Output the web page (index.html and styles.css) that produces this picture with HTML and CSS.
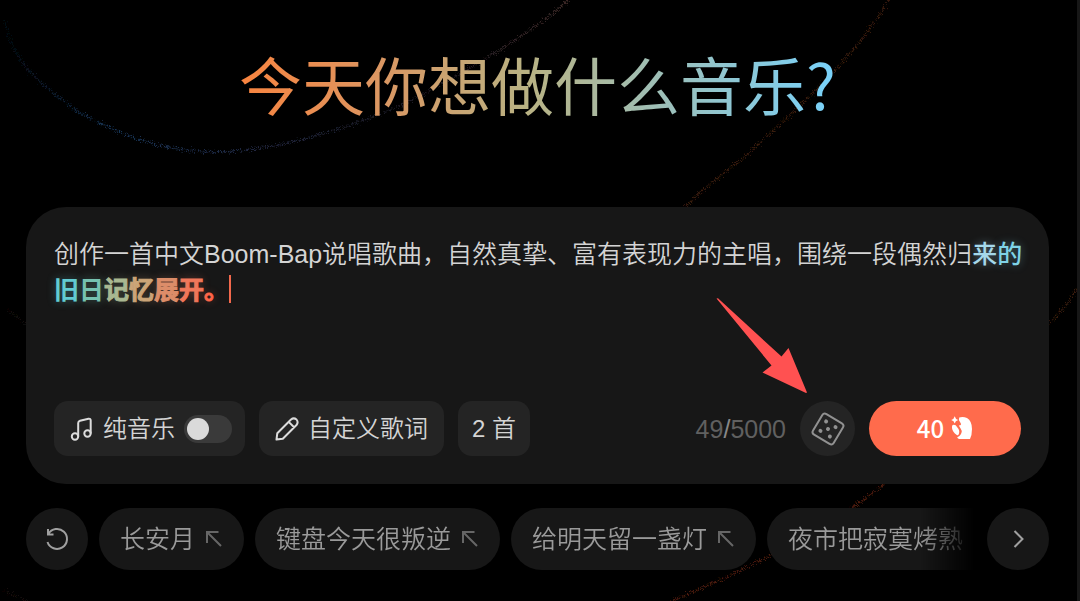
FILE: index.html
```html
<!DOCTYPE html>
<html lang="zh-CN">
<head>
<meta charset="utf-8">
<meta name="viewport" content="width=device-width, initial-scale=1">
<title>今天你想做什么音乐?</title>
<link rel="stylesheet" href="styles.css">
</head>
<body>
<div class="page">
  <svg class="orbits" viewBox="0 0 1080 601" preserveAspectRatio="none" aria-hidden="true">
    <defs>
      <filter id="grain" filterUnits="userSpaceOnUse" x="0" y="0" width="1080" height="601">
        <feTurbulence type="fractalNoise" baseFrequency="0.8" numOctaves="2" seed="4" result="n"/>
        <feDisplacementMap in="SourceGraphic" in2="n" scale="9" xChannelSelector="R" yChannelSelector="G"/>
      </filter>
      <linearGradient id="cool" gradientUnits="userSpaceOnUse" x1="0" y1="0" x2="570" y2="0">
        <stop offset="0" stop-color="#04080e"/><stop offset=".2" stop-color="#193558"/>
        <stop offset=".45" stop-color="#20263e"/><stop offset=".75" stop-color="#1d1a22"/><stop offset="1" stop-color="#3c2927"/>
      </linearGradient>
    </defs>
    <g class="orbit-lines" filter="url(#grain)">
      <path stroke="url(#cool)" d="M5 20C11 58 34 80 76 110C120 136 165 152 220 152C285 150 370 123 427 93C480 63 532 34 570 0"/>
      <path class="warm" d="M891 0C860 56 792 115 752 152C729 171 706 188 686 208"/>
      <path class="warm" d="M1080 289Q1068 308 1050 326"/>
      <path class="ember" d="M891 480C851 515 791 546 769 557C736 575 701 589 672 602"/>
      <path class="faint" d="M8 310L28 326M3 590L26 601"/>
    </g>
  </svg>

  <main class="content">
    <h1 class="title">今天你想做什么音乐?</h1>

    <section class="composer">
      <div class="prompt" contenteditable="true" role="textbox" aria-multiline="true" aria-label="音乐描述" spellcheck="false">创作一首中文Boom-Bap说唱歌曲，自然真挚、富有表现力的主唱，围绕一段偶然归<span class="fresh c1">来</span><span class="fresh c2">的</span><span class="fresh c3">旧</span><span class="fresh c4">日</span><span class="fresh heavy c5">记</span><span class="fresh heavy c6">忆</span><span class="fresh heavy c7">展</span><span class="fresh heavy c8">开</span><span class="fresh heavy c9">。</span><span class="caret"></span></div>
      <div class="toolbar">
        <label class="tool">
          <svg width="24" height="24" viewBox="0 0 24 24" class="icon" aria-hidden="true"><circle cx="5" cy="19.500" r="3.200"/><circle cx="17.500" cy="16.500" r="3.200"/><path d="M8.200 19.500V6Q8.200 4.300 10 3.800L18.500 1.800Q20.700 1.500 20.700 3.500V16.500"/></svg>
          <span>纯音乐</span>
          <input class="switch" type="checkbox" role="switch">
        </label>
        <button class="tool" type="button">
          <svg width="24" height="24" viewBox="0 0 24 24" class="icon" aria-hidden="true"><path d="M1.500 22.500L2.300 16.200L16 2.500Q18.700 0.300 21.500 2.500Q23.700 5.300 21.500 8L7.800 21.700ZM13.700 4.900L19.100 10.300"/></svg>
          <span>自定义歌词</span>
        </button>
        <button class="tool count" type="button">2 首</button>
        <span class="limit">49<b>/</b>5000</span>
        <button class="dice" type="button" aria-label="随机">
          <svg width="34" height="34" viewBox="0 0 34 34" aria-hidden="true"><g transform="rotate(31 17 17)"><rect x="5" y="5" width="24" height="24" rx="3"/><circle cx="11.500" cy="11.500" r="2"/><circle cx="22.500" cy="11.500" r="2"/><circle cx="17" cy="17" r="2"/><circle cx="11.500" cy="22.500" r="2"/><circle cx="22.500" cy="22.500" r="2"/></g></svg>
        </button>
        <button class="create" type="button" aria-label="生成，40">
          <span>40</span>
          <svg width="22" height="24" viewBox="0 0 22 24" aria-hidden="true"><path d="M3.700 0.300Q4.300 3.200 7.200 3.900Q4.300 4.600 3.700 7.500Q3.100 4.600 0.200 3.900Q3.100 3.200 3.700 0.300ZM1.600 9Q4.500 8 6.200 11.200Q9 14 8 17.500Q7.500 20 5.800 19Q1.500 16 1 12Q.8 10 1.600 9ZM8.200 1.500Q12 0.200 16 2Q21 5 21 13Q21 19 19 23H8Q6.500 22.500 6.200 21.300Q10.500 19.500 10.800 15Q10 13 7.800 9.500Q11.500 9.500 9 6Q7.200 4 8.200 1.500Z"/></svg>
        </button>
      </div>
    </section>

    <nav class="ideas" aria-label="灵感">
      <button class="round" type="button" aria-label="换一批">
        <svg width="26" height="26" viewBox="0 0 26 26" aria-hidden="true"><path d="M4.300 8A10 10 0 1 1 3.500 16M4 3V8.500H9.500"/></svg>
      </button>
      <div class="track">
        <button class="chip" type="button"><span>长安月</span><svg width="18" height="18" viewBox="0 0 18 18" aria-hidden="true"><path d="M2 13V2H13.500M2.500 2.500L16 16"/></svg></button>
        <button class="chip" type="button"><span>键盘今天很叛逆</span><svg width="18" height="18" viewBox="0 0 18 18" aria-hidden="true"><path d="M2 13V2H13.500M2.500 2.500L16 16"/></svg></button>
        <button class="chip" type="button"><span>给明天留一盏灯</span><svg width="18" height="18" viewBox="0 0 18 18" aria-hidden="true"><path d="M2 13V2H13.500M2.500 2.500L16 16"/></svg></button>
        <button class="chip" type="button"><span>夜市把寂寞烤熟</span><svg width="18" height="18" viewBox="0 0 18 18" aria-hidden="true"><path d="M2 13V2H13.500M2.500 2.500L16 16"/></svg></button>
      </div>
      <button class="round" type="button" aria-label="下一组">
        <svg width="26" height="26" viewBox="0 0 26 26" aria-hidden="true"><path d="M9.500 5L17.500 13L9.500 21"/></svg>
      </button>
    </nav>
  </main>

  <svg class="pointer" width="92" height="97" viewBox="0 0 92 97" aria-hidden="true"><path d="M0.500 0.500L2 0.300L65.500 58.500L72.500 50L91 94.500L90 95L46.500 74.500L55.500 67.500Z"/></svg>
</div>
</body>
</html>
```

FILE: styles.css
```css
* { box-sizing: border-box; }

body {
  margin: 0;
  background: #000;
  color: #d4d4d4;
  font-family: "Liberation Sans", "Noto Sans CJK SC", sans-serif;
}

button { font: inherit; color: inherit; border: 0; cursor: pointer; }
svg { display: block; flex: none; }

.page {
  position: relative;
  min-height: 100vh;
  border-right: 3px solid #171717;
  overflow: hidden;
}

.orbits { position: absolute; inset: 0; width: 100%; height: 100%; }
.orbit-lines { fill: none; }
.orbit-lines path { stroke-width: 2; stroke-dasharray: 2 1; }
.orbit-lines .warm { stroke: #391b0d; }
.orbit-lines .ember { stroke: #4a1a0d; }
.orbit-lines .faint { stroke: #140e0c; }

.content { position: relative; padding: 45px 28px 31px 26px; }

.title {
  width: fit-content;
  margin: 0 auto 86px;
  font-family: "Noto Sans CJK SC", sans-serif;
  font-size: 63px;
  font-weight: 400;
  line-height: 76px;
  background: linear-gradient(90deg, #f9843f, #dd9560 22%, #b9b283 48%, #9cc0bb 72%, #78d2fb);
  -webkit-background-clip: text;
  background-clip: text;
  color: transparent;
}

.composer { padding: 29px 28px 28px; border-radius: 40px; background: #171717; }

.prompt {
  min-height: 165px;
  margin-right: -8px;
  font-size: 25px;
  font-weight: 350;
  line-height: 36px;
  outline: 0;
}

.fresh { font-weight: 700; text-shadow: 0 0 8px color-mix(in srgb, currentColor 40%, transparent); }
.fresh.c1, .fresh.c2 { font-weight: 500; }
.heavy { -webkit-text-stroke: 1px currentColor; }
.c1 { color: #a5d8ea; }
.c2 { color: #7fd3e6; }
.c3 { color: #62ccd2; }
.c4 { color: #76c2b0; }
.c5 { color: #a9b892; }
.c6 { color: #cba578; }
.c7 { color: #dc8d69; }
.c8 { color: #f0775a; }
.c9 { color: #ff6649; }

.caret {
  display: inline-block;
  width: 2px;
  height: 28px;
  background: #f2684c;
  vertical-align: -4px;
}

.toolbar { display: flex; align-items: center; gap: 14px; font-size: 24px; line-height: 36px; }

.tool {
  display: flex;
  align-items: center;
  gap: 9px;
  height: 55px;
  padding: 0 13px 0 16px;
  border-radius: 14px;
  background: #242424;
  font-weight: 350;
  white-space: nowrap;
  cursor: pointer;
}
button.tool { padding-right: 16px; }
button.count { padding: 0 14px; }

.icon { fill: none; stroke: #dcdcdc; stroke-width: 2; stroke-linejoin: round; }

.switch {
  appearance: none;
  display: flex;
  align-items: center;
  width: 48px;
  height: 28px;
  margin: 0;
  padding: 3px;
  border-radius: 14px;
  background: #3a3a3a;
}
.switch::before { content: ""; width: 22px; height: 22px; border-radius: 50%; background: #dadada; }
.switch:checked { justify-content: flex-end; background: #ff6a4b; }

.limit { margin-left: auto; color: #606060; font-size: 25px; }
.limit b { font-weight: 400; color: #888; }

.dice {
  display: grid;
  place-items: center;
  width: 55px;
  height: 55px;
  padding: 0;
  border-radius: 50%;
  background: #242424;
}
.dice rect { fill: none; stroke: #919191; stroke-width: 2; }
.dice circle { fill: #919191; }

.create {
  display: flex;
  align-items: center;
  justify-content: center;
  gap: 7px;
  width: 152px;
  height: 55px;
  padding: 0 0 2px;
  border-radius: 28px;
  background: #ff6b4c;
  color: #fff;
  font-family: "Noto Sans CJK SC", sans-serif;
  font-weight: 500;
}
.create svg { fill: #fff; }

.ideas { display: flex; gap: 11px; margin-top: 24px; }

.round {
  display: grid;
  place-items: center;
  flex: none;
  width: 62px;
  height: 62px;
  padding: 0;
  border-radius: 50%;
  background: #171717;
}
.round svg { fill: none; stroke: #a0a0a0; stroke-width: 2; }

.track {
  display: flex;
  flex: 1;
  gap: 11px;
  min-width: 0;
  overflow: hidden;
  -webkit-mask-image: linear-gradient(90deg, #000 calc(100% - 56px), transparent calc(100% - 2px));
  mask-image: linear-gradient(90deg, #000 calc(100% - 56px), transparent calc(100% - 2px));
}

.chip {
  display: flex;
  flex: none;
  align-items: center;
  gap: 10px;
  height: 62px;
  padding: 0 21px;
  border-radius: 31px;
  background: #171717;
  color: #9a9a9a;
  font-size: 25px;
  font-weight: 350;
  line-height: 36px;
  white-space: nowrap;
}
.chip svg { fill: none; stroke: #666; stroke-width: 2; }

.pointer { position: absolute; left: 716px; top: 298px; fill: #ff5151; pointer-events: none; }
```
